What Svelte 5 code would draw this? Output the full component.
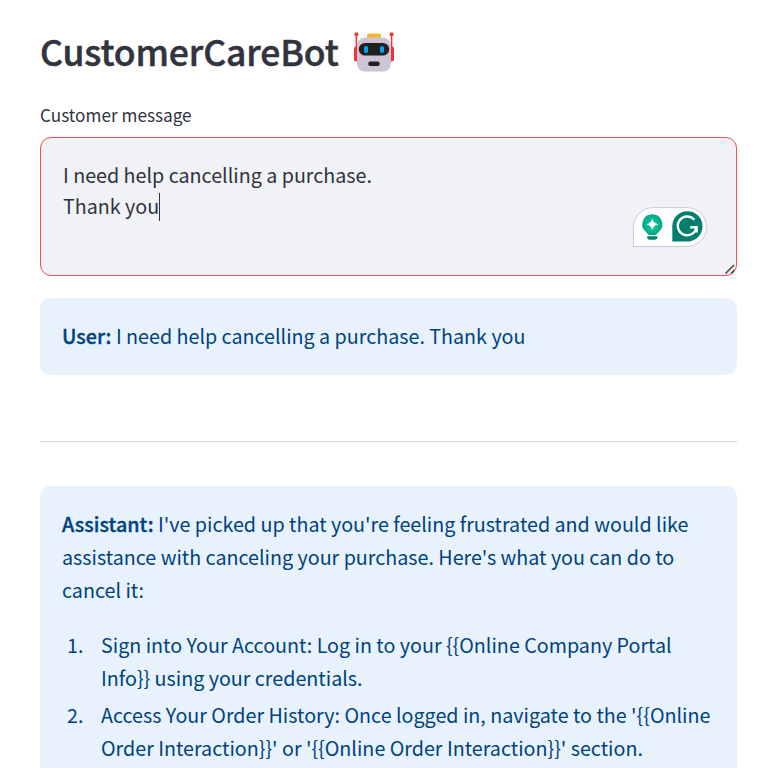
<script>
  const message = ['I need help cancelling a purchase.', 'Thank you'];
  const reply = [
    "I've picked up that you're feeling frustrated and would like",
    "assistance with canceling your purchase. Here's what you can do to",
    'cancel it:'
  ];
  const steps = [
    ['Sign into Your Account: Log in to your {{Online Company Portal', 'Info}} using your credentials.'],
    ["Access Your Order History: Once logged in, navigate to the '{{Online", "Order Interaction}}' or '{{Online Order Interaction}}' section."]
  ];
</script>

<main>
  <h1>
    <span>CustomerCareBot</span>
    <svg class="robot" width="42" height="42" viewBox="0 0 42 42" aria-label="robot">
      <path d="M3.4 4V29M38.6 4V29" stroke="#f8312f" stroke-width="1.5" />
      <circle cx="3.4" cy="3.2" r="2" fill="#f8312f" />
      <circle cx="38.6" cy="3.2" r="2" fill="#f8312f" />
      <rect x="1" y="15.5" width="5" height="15" rx="2" fill="#f8312f" />
      <rect x="36" y="15.5" width="5" height="15" rx="2" fill="#f8312f" />
      <rect x="14" y="2.4" width="14" height="6" rx="2" fill="#ffb02e" />
      <rect x="4" y="6.6" width="34" height="34" rx="8" fill="#cdc4d6" />
      <rect x="5.8" y="12" width="30.4" height="12.6" rx="6.3" fill="#212121" />
      <rect x="11" y="15" width="4" height="7" rx="1.8" fill="#00a6ed" />
      <rect x="27" y="15" width="4" height="7" rx="1.8" fill="#00a6ed" />
      <rect x="15.2" y="30.6" width="11.6" height="4.4" rx="2.2" fill="#212121" />
    </svg>
  </h1>

  <div class="label">Customer message</div>
  <div class="field">
    {#each message as line, i}
      <div>{line}{#if i === message.length - 1}<i class="caret"></i>{/if}</div>
    {/each}
    <svg class="assist" width="75" height="41" viewBox="0 0 75 41">
      <defs>
        <radialGradient id="bulb">
          <stop offset="0.3" stop-color="#15c39a" />
          <stop offset="1" stop-color="#00a886" />
        </radialGradient>
      </defs>
      <path d="M.5 39.5V20.2A19.6 19.6 0 0 1 20.3.6H54a19.45 19.45 0 0 1 0 38.9Z" fill="#fff" stroke="#c9cbdc" />
      <path d="M19.3 7.2a10 10 0 0 1 6.6 17.5L22.9 28H15.7l-3-3.3A10 10 0 0 1 19.3 7.2Z" fill="url(#bulb)" />
      <path d="M19.3 11.2q.9 5.1 6 6-5.1.9-6 6-.9-5.1-6-6 5.1-.9 6-6Z" fill="#fff" />
      <path d="M14.2 29.2h10.2v.8a2.7 2.7 0 0 1-2.7 2.7h-4.8a2.7 2.7 0 0 1-2.7-2.7Z" fill="#00836b" />
      <path d="M39.3 34.4V19.3A15.1 15.1 0 1 1 54.4 34.4Z" fill="#027e6f" />
      <path d="M61.4 12.8A9.4 9.4 0 1 0 63.5 20.2H57.2M63.6 19V25.6" fill="none" stroke="#fff" stroke-width="2.4" />
    </svg>
    <svg class="grip" width="12" height="12" viewBox="0 0 12 12">
      <path d="M1.5 10.5L10 2M7 10.5L10.5 7" stroke="#444" stroke-width="1.5" />
    </svg>
  </div>

  <section class="card user"><p><b>User:</b> {message.join(' ')}</p></section>
  <hr />
  <section class="card">
    {#each reply as line, i}
      <p>{#if i === 0}<b>Assistant:</b>{' '}{/if}{line}</p>
    {/each}
    <ol>
      {#each steps as step, i}
        <li>
          <span class="number">{i + 1}.</span>
          <div>{#each step as line}<p>{line}</p>{/each}</div>
        </li>
      {/each}
    </ol>
  </section>
</main>

<style>
  :global(body) { margin: 0; background: #fff; }
  main {
    box-sizing: border-box;
    height: 768px;
    overflow: hidden;
    padding: 25px 45px 0 40px;
    color: #31333f;
    font: 19.7px/33px "Noto Sans CJK SC", "Noto Sans CJK JP", sans-serif;
    white-space: nowrap;
  }
  h1 { display: flex; align-items: center; gap: 14px; height: 53px; margin: 0; font-size: 35.5px; font-weight: 500; line-height: 51px; letter-spacing: -0.12px; -webkit-text-stroke: 0.5px #31333f; }
  h1 span { margin-top: -2px; }
  .robot { flex: none; }
  .label { margin-top: 24px; height: 35px; line-height: 26px; font-size: 17.2px; }
  .field { box-sizing: border-box; position: relative; height: 139px; padding: 21px 22px; border: 1px solid #ff4b4b; border-radius: 11px; background: #f0f2f6; line-height: 31px; }
  .caret { display: inline-block; width: 1px; height: 28px; vertical-align: -7px; background: #31333f; }
  .assist { position: absolute; right: 28px; top: 69px; }
  .grip { position: absolute; right: 0; bottom: 0; }
  .card { padding: 21px 22px 23px; border-radius: 11px; background: #e8f2fc; color: #004280; }
  .user { margin-top: 22px; }
  p { margin: 0; }
  b { font-weight: 500; letter-spacing: 0.05px; -webkit-text-stroke: 0.35px #004280; }
  hr { height: 1px; margin: 66px 0 44px; border: 0; background: #d6d6d9; }
  ol { margin: 22px 0 0; padding: 0; list-style: none; }
  li { display: flex; margin-bottom: 4px; }
  .number { width: 39px; box-sizing: border-box; padding-left: 5px; }
</style>
